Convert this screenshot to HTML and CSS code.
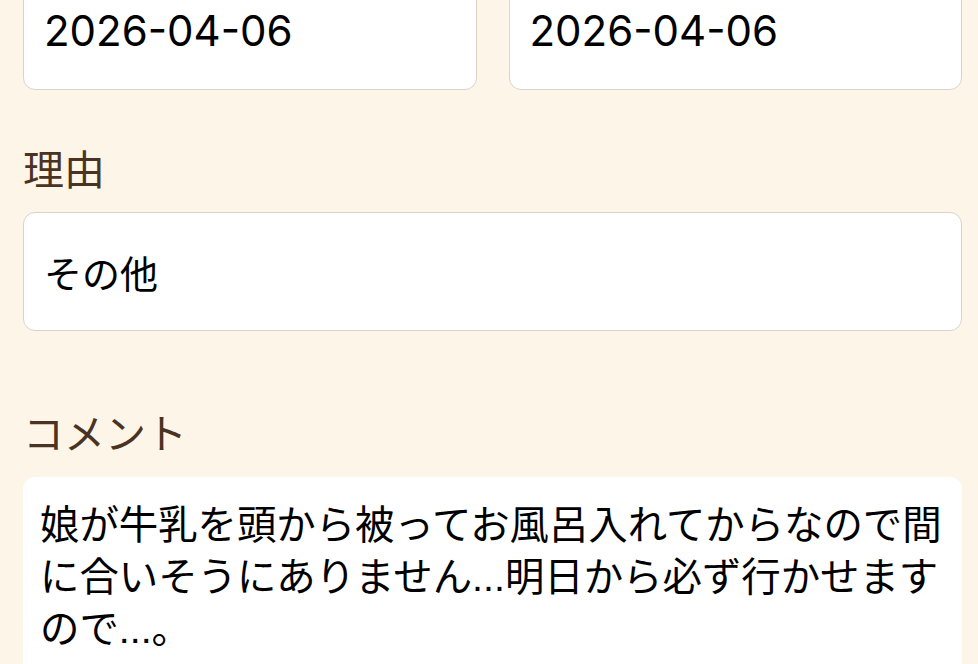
FILE: index.html
```html
<!DOCTYPE html>
<html lang="ja">
<head>
<meta charset="utf-8">
<title>申請フォーム</title>
<link rel="stylesheet" href="styles.css">
</head>
<body>
<main class="form">
  <div class="date-row">
    <div class="field-box date">2026-04-06</div>
    <div class="field-box date">2026-04-06</div>
  </div>
  <div class="label label-reason">理由</div>
  <div class="field-box select">その他</div>
  <div class="label label-comment">コメント</div>
  <div class="textarea">娘が牛乳を頭から被ってお風呂入れてからなので間に合いそうにありません...明日から必ず行かせますので...。</div>
</main>
</body>
</html>
```

FILE: styles.css
```css
html, body {
  margin: 0;
  padding: 0;
  background: #fdf5e8;
}

body {
  font-family: "Noto Sans CJK JP", sans-serif;
  color: #000;
  overflow: hidden;
}

.form {
  display: flex;
  flex-direction: column;
  padding: 0 16px 0 23px;
  margin-top: -29px;
}

.date-row {
  display: grid;
  grid-template-columns: 1fr 1fr;
  gap: 32px;
}

.field-box {
  box-sizing: border-box;
  height: 119px;
  background: #fff;
  border: 1px solid #d9d3cb;
  border-radius: 12px;
  display: flex;
  align-items: center;
  padding: 0 20px;
}

.date {
  font-family: "Inter", "Liberation Sans", sans-serif;
  font-size: 42px;
}

.select {
  font-size: 38px;
  padding-left: 20px;
}

.label {
  font-size: 41px;
  line-height: 47px;
  color: #4a3322;
}

.label-reason {
  margin-top: 54px;
  margin-bottom: 21px;
}

.label-comment {
  margin-top: 77px;
  margin-bottom: 22px;
}

.textarea {
  box-sizing: border-box;
  min-height: 230px;
  background: #fff;
  border-radius: 12px;
  padding: 22px 10px 0 17px;
  font-family: "Liberation Sans", "Noto Sans CJK JP", sans-serif;
  font-size: 39.4px;
  line-height: 52px;
}
```
